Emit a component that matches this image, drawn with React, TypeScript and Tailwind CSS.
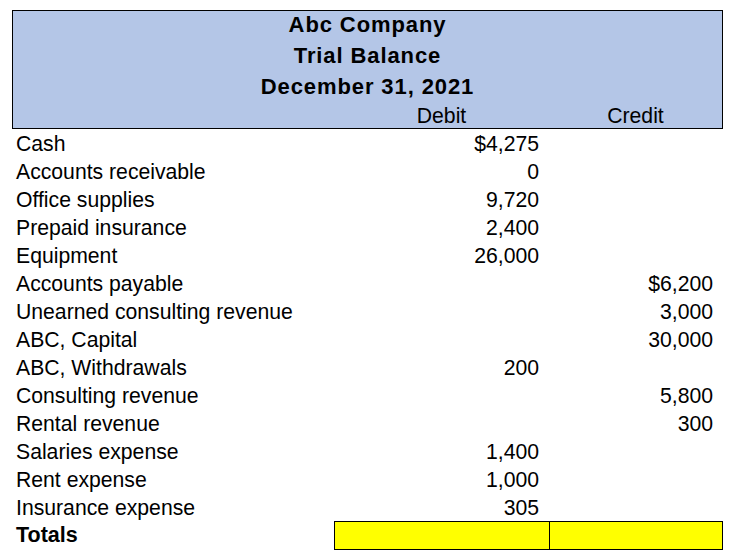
import React from "react";

type Row = {
  name: string;
  debit?: string;
  credit?: string;
};

const rows: Row[] = [
  { name: "Cash", debit: "$4,275" },
  { name: "Accounts receivable", debit: "0" },
  { name: "Office supplies", debit: "9,720" },
  { name: "Prepaid insurance", debit: "2,400" },
  { name: "Equipment", debit: "26,000" },
  { name: "Accounts payable", credit: "$6,200" },
  { name: "Unearned consulting revenue", credit: "3,000" },
  { name: "ABC, Capital", credit: "30,000" },
  { name: "ABC, Withdrawals", debit: "200" },
  { name: "Consulting revenue", credit: "5,800" },
  { name: "Rental revenue", credit: "300" },
  { name: "Salaries expense", debit: "1,400" },
  { name: "Rent expense", debit: "1,000" },
  { name: "Insurance expense", debit: "305" },
];

const titles = ["Abc Company", "Trial Balance", "December 31, 2021"];

export default function App() {
  return (
    <div
      className="w-[730px] h-[558px] bg-white pl-[12px] pt-[10px] text-black text-[21.2px]"
      style={{ fontFamily: '"Liberation Sans", Arial, sans-serif' }}
    >
      <div className="w-[711px]">
        {/* heading block */}
        <div className="h-[119px] border border-black bg-[#b4c6e7]">
          {titles.map((t) => (
            <div
              key={t}
              className="h-[31px] leading-[28px] text-center font-bold text-[22px] tracking-[0.9px]"
            >
              {t}
            </div>
          ))}
          <div className="grid grid-cols-[321px_215px_173px] h-[23px] pt-[3px] leading-[18px]">
            <div />
            <div className="text-center">Debit</div>
            <div className="text-center">Credit</div>
          </div>
        </div>

        {/* accounts */}
        {rows.map((r) => (
          <div
            key={r.name}
            className="grid grid-cols-[322px_215px_174px] h-[28px] pt-[1px] leading-[27px]"
          >
            <div className="pl-[4px] whitespace-nowrap">{r.name}</div>
            <div className="text-right pr-[10px]">{r.debit}</div>
            <div className="text-right pr-[10px]">{r.credit}</div>
          </div>
        ))}

        {/* totals */}
        <div className="grid grid-cols-[322px_215px_174px] h-[29px]">
          <div className="pl-[4px] pt-[2px] leading-[25px] font-bold text-[21.5px]">
            Totals
          </div>
          <div className="border-y border-l border-black bg-[#ffff00]" />
          <div className="border border-black bg-[#ffff00]" />
        </div>
      </div>
    </div>
  );
}
